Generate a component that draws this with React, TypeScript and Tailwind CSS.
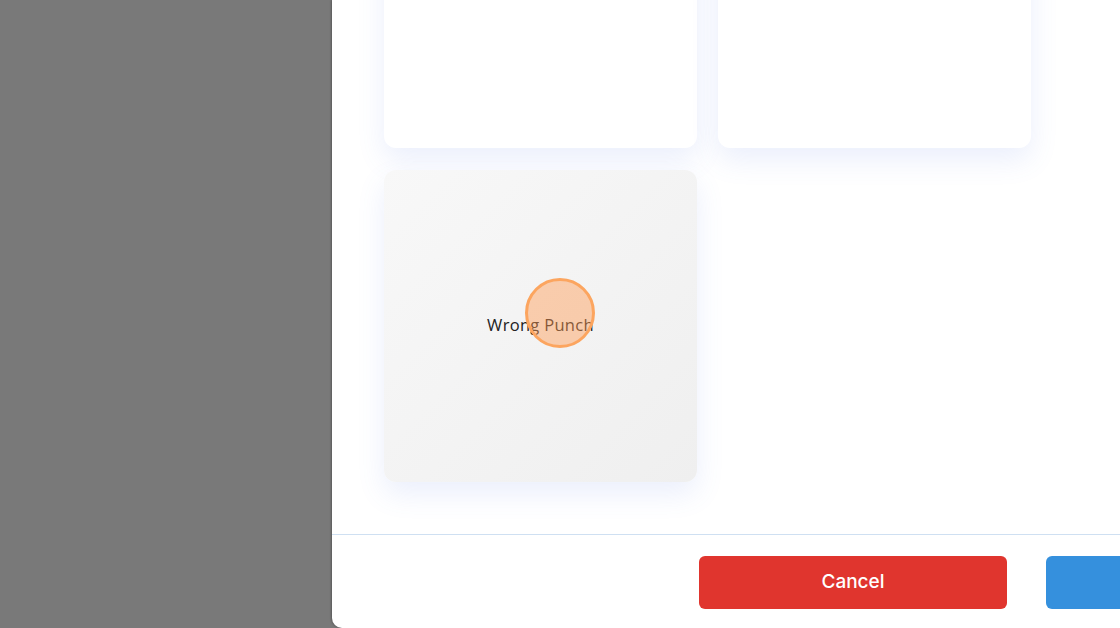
const cards = [
  { label: "", faded: false },
  { label: "", faded: false },
  { label: "Wrong Punch", faded: true },
];

export default function App() {
  return (
    <div
      className="relative flex w-[1120px] h-[628px] overflow-hidden bg-[#797979]"
      style={{ fontFamily: "'Open Sans', 'Liberation Sans', sans-serif" }}
    >
      <div className="w-[332px] shrink-0" />
      <div className="w-[1100px] shrink-0 h-full flex flex-col bg-white rounded-bl-[10px] shadow-[-1px_0_2px_rgba(0,0,0,0.25)]">
        <div className="flex-1 overflow-hidden pl-[52px]">
          <div className="grid grid-cols-[313px_313px] gap-x-[21px] gap-y-[22px] mt-[-164px]">
            {cards.map((card, i) => (
              <div
                key={i}
                className={
                  card.faded
                    ? "h-[312px] rounded-[12px] flex items-center justify-center bg-gradient-to-br from-[#f8f8f8] to-[#efefef] shadow-[0_12px_28px_rgba(90,120,230,0.12)]"
                    : "h-[312px] rounded-[12px] flex items-center justify-center bg-white shadow-[0_12px_28px_rgba(90,120,230,0.12)]"
                }
              >
                <span className="text-[16.5px] text-[#222] tracking-[0.3px] -mt-[2px]">{card.label}</span>
              </div>
            ))}
          </div>
        </div>
        <div className="h-[94px] shrink-0 border-t border-[#cfe0f2] pt-[21px] pl-[367px] flex gap-[39px]">
          <button className="w-[308px] shrink-0 h-[53px] rounded-[6px] bg-[#e0352e] text-white text-[19px] font-medium font-['Inter',sans-serif]">
            Cancel
          </button>
          <button className="w-[308px] shrink-0 h-[53px] rounded-[6px] bg-[#3590dd]" />
        </div>
      </div>
      <div className="absolute left-[525px] top-[278px] w-[70px] h-[70px] rounded-full border-[3px] border-[#fca55f] bg-[rgba(255,155,85,0.45)]" />
    </div>
  );
}
